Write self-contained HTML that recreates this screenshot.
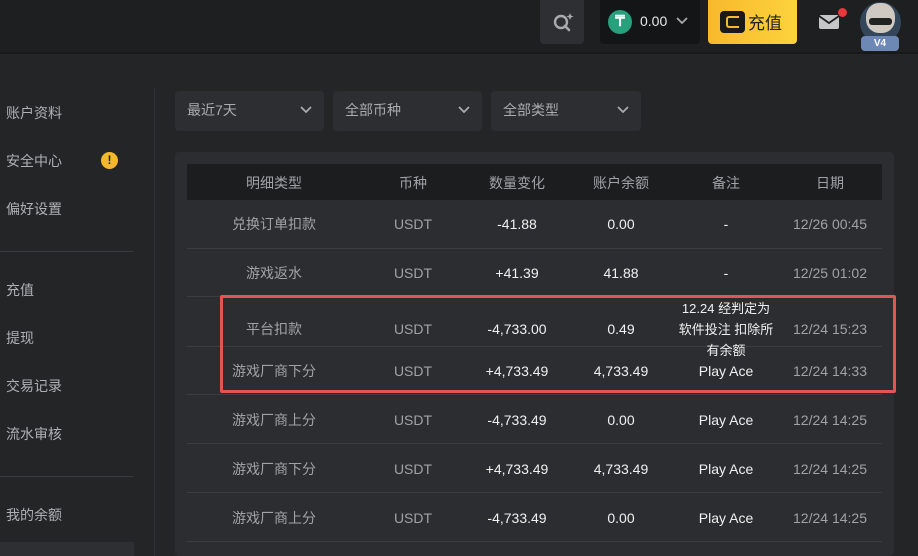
<!DOCTYPE html>
<html><head><meta charset="utf-8"><style>
*{margin:0;padding:0;box-sizing:border-box}
body{width:918px;height:556px;overflow:hidden;background:#242527;font-family:"Liberation Sans","Noto Sans CJK SC",sans-serif;position:relative;color:#b9bbbe}
.a{position:absolute}
.top{left:0;top:0;width:918px;height:54px;background:#1e1f21;border-bottom:2px solid #18191a}
.side{font-size:14px;color:#aeb0b3;left:6px}
.hr{left:0;width:134px;height:1px;background:#3a3b3e}
.dd{top:91px;height:40px;background:#2d2e31;border-radius:4px;font-size:14px;color:#a9abae;padding:9px 12px}
.dd svg{position:absolute;right:12px;top:15px}
.panel{left:175px;top:152px;width:719px;height:404px;background:#2c2d30;border-radius:4px}
.row{left:187px;width:695px;border-bottom:1px solid #3b3c3f;font-size:14px}
.c{position:absolute;top:0;text-align:center;transform:translateX(-50%);white-space:nowrap}
.k{margin-top:-2px}
.w{color:#f0f0f0}
.g{color:#a0a2a5}
</style></head><body>
<div class="a top"></div>
<div class="a" style="left:540px;top:0;width:44px;height:44px;background:#2e2f33;border-radius:0 0 4px 4px"></div>
<svg class="a" style="left:552px;top:11px" width="22" height="22" viewBox="0 0 22 22"><circle cx="9" cy="11" r="6" stroke="#a8aaad" stroke-width="2.4" fill="none"/><path d="M13 15l4 4" stroke="#a8aaad" stroke-width="2.6" stroke-linecap="round"/><path d="M18 2l1 2.5 2.5 1-2.5 1-1 2.5-1-2.5-2.5-1 2.5-1z" fill="#a8aaad"/></svg>
<div class="a" style="left:600px;top:0;width:100px;height:44px;background:#141516;border-radius:0 0 4px 4px"></div>
<div class="a" style="left:608px;top:10px;width:24px;height:24px;border-radius:50%;background:#26a17b;color:#fff;font-size:15px;font-weight:bold;text-align:center;line-height:24px">₸</div>
<div class="a" style="left:640px;top:13px;font-size:14px;color:#e8e8e8">0.00</div>
<svg class="a" style="left:676px;top:17px" width="12" height="8"><path d="M1 1l5 5 5-5" stroke="#a8aaad" stroke-width="1.8" fill="none"/></svg>
<div class="a" style="left:708px;top:0;width:89px;height:44px;background:linear-gradient(90deg,#f8b92c,#fcd33c);border-radius:0 0 4px 4px"></div>
<div class="a" style="left:720px;top:11px;width:25px;height:22px;background:#1a1a1a;border-radius:4px"></div>
<div class="a" style="left:726px;top:16px;width:13px;height:12px;border:2.5px solid #f8b92c;border-right:none;border-radius:3px 0 0 3px"></div>
<div class="a" style="left:748px;top:9px;font-size:17px;color:#222">充值</div>
<div class="a" style="left:819px;top:15px;width:20px;height:14px;background:#c5c6c8;border-radius:2px"></div>
<svg class="a" style="left:819px;top:15px" width="20" height="14"><path d="M0 1l10 7 10-7" stroke="#1e1f21" stroke-width="1.8" fill="none"/></svg>
<div class="a" style="left:838px;top:8px;width:9px;height:9px;border-radius:50%;background:#e8383c"></div>
<div class="a" style="left:860px;top:2px;width:41px;height:41px;border-radius:50%;background:#33465a"></div>
<div class="a" style="left:866px;top:3px;width:29px;height:30px;border-radius:45%;background:#cfc9c2"></div>
<div class="a" style="left:869px;top:18px;width:23px;height:7px;border-radius:3px;background:#222"></div>
<div class="a" style="left:861px;top:36px;width:38px;height:15px;border-radius:4px;background:#6d88b4;color:#fff;font-size:10px;font-weight:bold;text-align:center;line-height:15px">V4</div>

<div class="a side" style="top:103px">账户资料</div>
<div class="a side" style="top:151px">安全中心</div>
<div class="a" style="left:101px;top:152px;width:17px;height:17px;border-radius:50%;background:#f5b82a;color:#222;font-size:12px;font-weight:bold;text-align:center;line-height:17px">!</div>
<div class="a side" style="top:199px">偏好设置</div>
<div class="a hr" style="top:251px"></div>
<div class="a side" style="top:280px">充值</div>
<div class="a side" style="top:328px">提现</div>
<div class="a side" style="top:376px">交易记录</div>
<div class="a side" style="top:424px">流水审核</div>
<div class="a hr" style="top:476px"></div>
<div class="a side" style="top:505px">我的余额</div>
<div class="a" style="left:0;top:542px;width:134px;height:14px;background:#2e2f33"></div>
<div class="a" style="left:154px;top:88px;width:1px;height:468px;background:#303134"></div>

<div class="a dd" style="left:175px;width:149px">最近7天<svg width="12" height="8"><path d="M1 1l5 5 5-5" stroke="#a8aaad" stroke-width="1.8" fill="none"/></svg></div>
<div class="a dd" style="left:333px;width:149px">全部币种<svg width="12" height="8"><path d="M1 1l5 5 5-5" stroke="#a8aaad" stroke-width="1.8" fill="none"/></svg></div>
<div class="a dd" style="left:491px;width:150px">全部类型<svg width="12" height="8"><path d="M1 1l5 5 5-5" stroke="#a8aaad" stroke-width="1.8" fill="none"/></svg></div>

<div class="a panel"></div>
<div class="a" style="left:187px;top:164px;width:695px;height:36px;background:#1c1d1f;font-size:14px;color:#a0a2a5">
<div class="c" style="left:87px;top:9px">明细类型</div><div class="c" style="left:226px;top:9px">币种</div><div class="c" style="left:330px;top:9px">数量变化</div><div class="c" style="left:434px;top:9px">账户余额</div><div class="c" style="left:539px;top:9px">备注</div><div class="c" style="left:643px;top:9px">日期</div></div>

<div class="a row" style="top:200px;height:49px"><div class="c g k" style="left:87px;top:16px">兑换订单扣款</div><div class="c g" style="left:226px;top:16px">USDT</div><div class="c w" style="left:330px;top:16px">-41.88</div><div class="c w" style="left:434px;top:16px">0.00</div><div class="c w" style="left:539px;top:16px">-</div><div class="c g" style="left:643px;top:16px">12/26 00:45</div></div>
<div class="a row" style="top:249px;height:48px"><div class="c g k" style="left:87px;top:16px">游戏返水</div><div class="c g" style="left:226px;top:16px">USDT</div><div class="c w" style="left:330px;top:16px">+41.39</div><div class="c w" style="left:434px;top:16px">41.88</div><div class="c w" style="left:539px;top:16px">-</div><div class="c g" style="left:643px;top:16px">12/25 01:02</div></div>
<div class="a row" style="top:297px;height:50px"><div class="c g k" style="left:87px;top:24px">平台扣款</div><div class="c g" style="left:226px;top:24px">USDT</div><div class="c w" style="left:330px;top:24px">-4,733.00</div><div class="c w" style="left:434px;top:24px">0.49</div><div class="c w" style="left:539px;top:1px;font-size:13px;line-height:21px;text-align:center">12.24 经判定为<br>软件投注 扣除所<br>有余额</div><div class="c g" style="left:643px;top:24px">12/24 15:23</div></div>
<div class="a row" style="top:347px;height:48px"><div class="c g k" style="left:87px;top:16px">游戏厂商下分</div><div class="c g" style="left:226px;top:16px">USDT</div><div class="c w" style="left:330px;top:16px">+4,733.49</div><div class="c w" style="left:434px;top:16px">4,733.49</div><div class="c w" style="left:539px;top:16px">Play Ace</div><div class="c g" style="left:643px;top:16px">12/24 14:33</div></div>
<div class="a row" style="top:395px;height:49px"><div class="c g k" style="left:87px;top:17px">游戏厂商上分</div><div class="c g" style="left:226px;top:17px">USDT</div><div class="c w" style="left:330px;top:17px">-4,733.49</div><div class="c w" style="left:434px;top:17px">0.00</div><div class="c w" style="left:539px;top:17px">Play Ace</div><div class="c g" style="left:643px;top:17px">12/24 14:25</div></div>
<div class="a row" style="top:444px;height:49px"><div class="c g k" style="left:87px;top:17px">游戏厂商下分</div><div class="c g" style="left:226px;top:17px">USDT</div><div class="c w" style="left:330px;top:17px">+4,733.49</div><div class="c w" style="left:434px;top:17px">4,733.49</div><div class="c w" style="left:539px;top:17px">Play Ace</div><div class="c g" style="left:643px;top:17px">12/24 14:25</div></div>
<div class="a row" style="top:493px;height:49px"><div class="c g k" style="left:87px;top:17px">游戏厂商上分</div><div class="c g" style="left:226px;top:17px">USDT</div><div class="c w" style="left:330px;top:17px">-4,733.49</div><div class="c w" style="left:434px;top:17px">0.00</div><div class="c w" style="left:539px;top:17px">Play Ace</div><div class="c g" style="left:643px;top:17px">12/24 14:25</div></div>

<div class="a" style="left:220px;top:295px;width:676px;height:98px;border:3px solid #e25557;border-radius:2px"></div>
</body></html>
